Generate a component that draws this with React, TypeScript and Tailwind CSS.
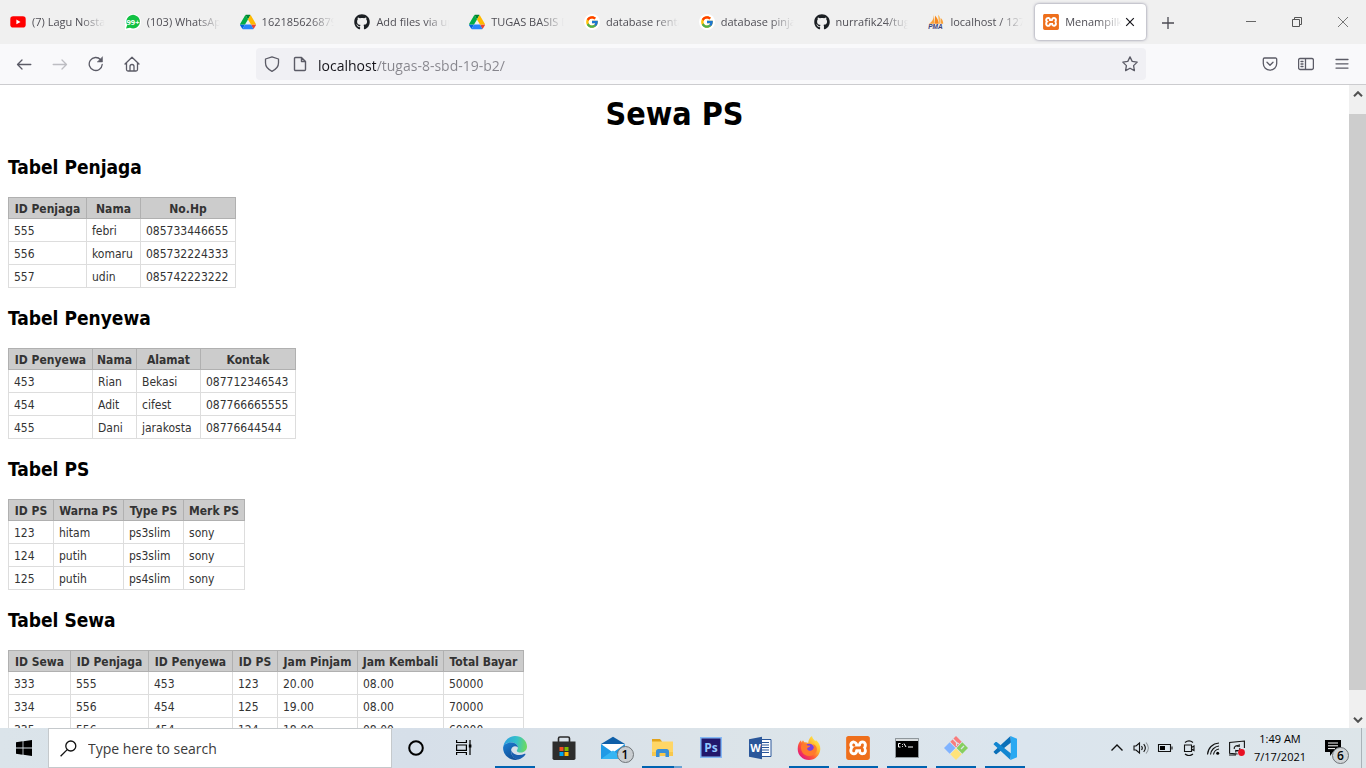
import type { ReactNode } from "react";
import { FaGithub } from "react-icons/fa";
import { FcGoogle } from "react-icons/fc";
import { SiXampp } from "react-icons/si";

function YouTubeIcon() {
  return (
    <svg viewBox="0 0 16 16" className="size-4">
      <rect x="0.3" y="2.3" width="15.4" height="11.2" rx="2.8" fill="#ff0000" />
      <path d="M6.4 5.5v4.8l4.1-2.4z" fill="#fff" />
    </svg>
  );
}

function WhatsAppIcon() {
  return (
    <svg viewBox="0 0 16 16" className="size-4">
      <path d="M0 16V8a8 8 0 1 1 8 8z" fill="#fff" />
      <path d="M1 14.6 2.2 11A6.8 6.8 0 1 1 5 13.7z" fill="#12c143" />
      <text x="8" y="10.6" textAnchor="middle" fontSize="7.5" fontWeight="700" fill="#fff" fontFamily="Open Sans, sans-serif">
        99+
      </text>
    </svg>
  );
}

function DriveIcon() {
  return (
    <svg viewBox="0 0 87.3 78" className="size-4">
      <path d="m6.6 66.85 3.85 6.65c.8 1.4 1.95 2.5 3.3 3.3l13.75-23.8h-27.5c0 1.55.4 3.1 1.2 4.5z" fill="#0066da" />
      <path d="m43.65 25-13.75-23.8c-1.35.8-2.5 1.9-3.3 3.3l-25.4 44a9 9 0 0 0-1.2 4.5h27.5z" fill="#00ac47" />
      <path d="m73.55 76.8c1.35-.8 2.5-1.9 3.3-3.3l1.6-2.75 7.65-13.25c.8-1.4 1.2-2.95 1.2-4.5h-27.5l5.85 11.5z" fill="#ea4335" />
      <path d="m43.65 25 13.75-23.8c-1.35-.8-2.9-1.2-4.5-1.2h-18.5c-1.6 0-3.15.45-4.5 1.2z" fill="#00832d" />
      <path d="m59.8 53h-32.3l-13.75 23.8c1.35.8 2.9 1.2 4.5 1.2h50.8c1.6 0 3.15-.45 4.5-1.2z" fill="#2684fc" />
      <path d="m73.4 26.5-12.7-22c-.8-1.4-1.95-2.5-3.3-3.3l-13.75 23.8 16.15 28h27.45c0-1.55-.4-3.1-1.2-4.5z" fill="#ffba00" />
    </svg>
  );
}

function GoogleIcon() {
  return (
    <span className="flex size-4 items-center justify-center rounded-full bg-white">
      <FcGoogle className="size-3.5" />
    </span>
  );
}

function PmaIcon() {
  return (
    <svg viewBox="0 0 16 16" className="size-4">
      <path d="M5.8 0.5C6 4 4.5 8 0.8 9.700h6z" fill="#f9a13a" />
      <path d="M7 1.5v8.200h3.800C10.600 7 9 3.500 7 1.500z" fill="#f7891e" />
      <path d="M10 0.800c2.500 2 3 5.500 2 8.900h-1z" fill="#fbb85c" />
      <path d="M12.800 4c1.800 1.500 2.400 4 2.400 5.700h-2.600z" fill="#f9a13a" />
      <text x="7.500" y="15" textAnchor="middle" fontSize="6.500" fontWeight="700" fontStyle="italic" fill="#3a3f78" fontFamily="Liberation Sans, sans-serif">
        PMA
      </text>
    </svg>
  );
}

function XamppTile({ small }: { small?: boolean }) {
  return (
    <span className={small ? "flex size-4 rounded-sm bg-white" : "flex size-6 rounded-sm bg-white"}>
      <SiXampp className={small ? "size-4 text-[#ee6f1c]" : "size-6 text-[#ee6f1c]"} />
    </span>
  );
}

type Tab = { title: string; icon: ReactNode };

const tabs: Tab[] = [
  { title: "(7) Lagu Nostalgia", icon: <YouTubeIcon /> },
  { title: "(103) WhatsApp", icon: <WhatsAppIcon /> },
  { title: "1621856268790", icon: <DriveIcon /> },
  { title: "Add files via upload", icon: <FaGithub className="size-4 text-[#1b1f23]" /> },
  { title: "TUGAS BASIS DATA", icon: <DriveIcon /> },
  { title: "database rental", icon: <GoogleIcon /> },
  { title: "database pinjam", icon: <GoogleIcon /> },
  { title: "nurrafik24/tugas", icon: <FaGithub className="size-4 text-[#1b1f23]" /> },
  { title: "localhost / 127.0.0.1", icon: <PmaIcon /> },
];

function TabTitle({ children }: { children: ReactNode }) {
  return (
    <span className="min-w-0 flex-1 overflow-hidden pt-px text-left text-[11px] whitespace-nowrap text-[#4f4e55] [mask-image:linear-gradient(to_left,transparent,black_24px)]">
      {children}
    </span>
  );
}

function TabStrip() {
  return (
    <div className="flex h-11 shrink-0 bg-[#f0f0f0]">
      <div role="tablist" className="flex min-w-0 flex-1">
        {tabs.map((tab) => (
          <div key={tab.title} className="flex min-w-0 flex-1 px-0.5 py-1">
            <button role="tab" aria-selected="false" className="flex min-w-0 flex-1 items-center gap-1.5 rounded px-2">
              <span className="shrink-0">{tab.icon}</span>
              <TabTitle>{tab.title}</TabTitle>
            </button>
          </div>
        ))}
        <div className="flex min-w-0 flex-1 px-0.5 py-1">
          <div className="flex min-w-0 flex-1 items-center rounded bg-white px-2 shadow-[0_0_3px_rgba(80,80,110,0.7)]">
            <button role="tab" aria-selected="true" className="flex min-w-0 flex-1 items-center gap-1.5">
              <span className="shrink-0">
                <XamppTile small />
              </span>
              <TabTitle>Menampilkan Data</TabTitle>
            </button>
            <button aria-label="Close tab" className="shrink-0">
              <svg viewBox="0 0 16 16" className="size-4" stroke="#15141a" strokeWidth="1.2">
                <path d="m4.200 4.200 7.600 7.600M11.800 4.200l-7.600 7.600" />
              </svg>
            </button>
          </div>
        </div>
      </div>
      <button aria-label="New tab" className="flex w-10 items-center justify-center pt-px">
        <svg viewBox="0 0 12 12" className="size-3" stroke="#4b4a52" strokeWidth="1.300">
          <path d="M6 0v12M0 6h12" />
        </svg>
      </button>
      <div className="ml-10 flex">
        <button aria-label="Minimize" className="flex w-[46px] items-center justify-center">
          <svg viewBox="0 0 10 10" className="size-2.5" stroke="#666" strokeWidth="1">
            <path d="M0 4.500h10" />
          </svg>
        </button>
        <button aria-label="Restore" className="flex w-[46px] items-center justify-center">
          <svg viewBox="0 0 10 10" className="size-2.5" fill="none" stroke="#555" strokeWidth="1">
            <path d="M.5 2.500h7v7h-7zM2.500 2.500v-2h7v7h-2" />
          </svg>
        </button>
        <button aria-label="Close window" className="flex w-[46px] items-center justify-center">
          <svg viewBox="0 0 10 10" className="size-2.5" stroke="#666" strokeWidth="0.9">
            <path d="m0 0 10 10M10 0 0 10" />
          </svg>
        </button>
      </div>
    </div>
  );
}

function ToolButton({ label, children }: { label: string; children: ReactNode }) {
  return (
    <button aria-label={label} className="flex w-9 items-center justify-center">
      <svg viewBox="0 0 16 16" className="size-4" fill="none" stroke="#5b5b66" strokeWidth="1.300" strokeLinecap="round" strokeLinejoin="round">
        {children}
      </svg>
    </button>
  );
}

function Toolbar() {
  return (
    <div className="flex h-[41px] shrink-0 items-stretch border-b border-[#cccccf] bg-[#f9f9fb] px-1.5">
      <ToolButton label="Back">
        <path d="M14.800 8.500H1.500M6 4 1.500 8.500 6 13" />
      </ToolButton>
      <ToolButton label="Forward">
        <path d="M1.200 8.500h13.300M10 4l4.500 4.500L10 13" stroke="#bdbdc2" />
      </ToolButton>
      <ToolButton label="Reload">
        <path d="M14.200 8.500A6.500 6.500 0 1 1 12.600 3.700" />
        <path d="M14.500 1v5h-5z" fill="#5b5b66" strokeWidth="0.500" />
      </ToolButton>
      <ToolButton label="Home">
        <path d="m1 8 7-6.800L15 8M2.500 7v6.500a1.500 1.500 0 0 0 1.500 1.500h8a1.500 1.500 0 0 0 1.500-1.500V7M6 15v-4.500a2 2 0 0 1 4 0V15" />
      </ToolButton>
      <div className="my-1 mr-[106px] ml-[106px] flex min-w-0 flex-1 items-center rounded bg-[#f0f0f4] px-2">
        <svg viewBox="0 0 16 16" className="size-4 shrink-0" fill="none" stroke="#5b5b66" strokeWidth="1.300" strokeLinejoin="round">
          <path d="M8 .8 14.500 3v4c0 3.800-2.800 6.500-6.500 8.300C4.300 13.500 1.500 10.800 1.500 7V3z" />
        </svg>
        <svg viewBox="0 0 16 16" className="ml-3 size-4 shrink-0" fill="none" stroke="#5b5b66" strokeWidth="1.400" strokeLinejoin="round">
          <path d="M3.500 1.500H9.500L13.500 5.500V13.500a1 1 0 0 1-1 1h-9a1 1 0 0 1-1-1v-11a1 1 0 0 1 1-1zM9.500 1.500v4h4" />
        </svg>
        <input
          aria-label="Address"
          defaultValue="localhost/tugas-8-sbd-19-b2/"
          className="ml-2.5 min-w-0 flex-1 bg-[linear-gradient(90deg,#15141a_58px,#86858c_58px)] bg-clip-text pt-0.5 text-[14px] text-transparent outline-none"
        />
        <button aria-label="Bookmark this page">
          <svg viewBox="0 0 16 16" className="size-4" fill="none" stroke="#5b5b66" strokeWidth="1.300" strokeLinejoin="round">
            <path d="m8 .9 2.200 4.500 5 .7-3.600 3.500.8 5L8 12.200l-4.400 2.400.8-5L.8 6.100l5-.7z" />
          </svg>
        </button>
      </div>
      <div className="flex">
        <ToolButton label="Save to Pocket">
          <path d="M2.500 2h11a1.200 1.200 0 0 1 1.200 1.200V7.500a6.700 6.700 0 0 1-13.400 0V3.200A1.200 1.200 0 0 1 2.500 2zM5 6.300 8 9.200l3-2.900" />
        </ToolButton>
        <ToolButton label="Sidebars">
          <path d="M2 2.500h12A1.500 1.500 0 0 1 15.400 4v8a1.500 1.500 0 0 1-1.400 1.500H2A1.500 1.500 0 0 1 .6 12V4A1.500 1.500 0 0 1 2 2.500zM7.500 2.500v11M3 5.500h2M3 8h2M3 10.500h2" />
        </ToolButton>
        <ToolButton label="Menu">
          <path d="M2 3.500h12M2 7.800h12M2 12.100h12" />
        </ToolButton>
      </div>
    </div>
  );
}

type Sheet = { title: string; cols: { label: string; width: number }[]; rows: string[][] };

const sheets: Sheet[] = [
  {
    title: "Tabel Penjaga",
    cols: [
      { label: "ID Penjaga", width: 78 },
      { label: "Nama", width: 54 },
      { label: "No.Hp", width: 95 },
    ],
    rows: [
      ["555", "febri", "085733446655"],
      ["556", "komaru", "085732224333"],
      ["557", "udin", "085742223222"],
    ],
  },
  {
    title: "Tabel Penyewa",
    cols: [
      { label: "ID Penyewa", width: 84 },
      { label: "Nama", width: 44 },
      { label: "Alamat", width: 64 },
      { label: "Kontak", width: 95 },
    ],
    rows: [
      ["453", "Rian", "Bekasi", "087712346543"],
      ["454", "Adit", "cifest", "087766665555"],
      ["455", "Dani", "jarakosta", "08776644544"],
    ],
  },
  {
    title: "Tabel PS",
    cols: [
      { label: "ID PS", width: 45 },
      { label: "Warna PS", width: 70 },
      { label: "Type PS", width: 60 },
      { label: "Merk PS", width: 61 },
    ],
    rows: [
      ["123", "hitam", "ps3slim", "sony"],
      ["124", "putih", "ps3slim", "sony"],
      ["125", "putih", "ps4slim", "sony"],
    ],
  },
  {
    title: "Tabel Sewa",
    cols: [
      { label: "ID Sewa", width: 62 },
      { label: "ID Penjaga", width: 78 },
      { label: "ID Penyewa", width: 84 },
      { label: "ID PS", width: 45 },
      { label: "Jam Pinjam", width: 80 },
      { label: "Jam Kembali", width: 86 },
      { label: "Total Bayar", width: 80 },
    ],
    rows: [
      ["333", "555", "453", "123", "20.00", "08.00", "50000"],
      ["334", "556", "454", "125", "19.00", "08.00", "70000"],
      ["335", "556", "454", "124", "18.00", "08.00", "60000"],
    ],
  },
];

function SheetTable({ sheet }: { sheet: Sheet }) {
  return (
    <section>
      <h2 className="mb-[18px] text-[19px] leading-6 font-bold text-black">{sheet.title}</h2>
      <table className="w-0 table-fixed border-collapse text-[12px] leading-4 whitespace-nowrap text-[#333]">
        <colgroup>
          {sheet.cols.map((c) => (
            <col key={c.label} style={{ width: c.width }} />
          ))}
        </colgroup>
        <thead>
          <tr>
            {sheet.cols.map((c) => (
              <th key={c.label} className="h-[21px] border border-[#b0b0b0] bg-[#cccccc] p-0 pt-0.5 text-center font-bold">
                {c.label}
              </th>
            ))}
          </tr>
        </thead>
        <tbody>
          {sheet.rows.map((row) => (
            <tr key={row[0]}>
              {row.map((cell, i) => (
                <td key={i} className="h-[23px] border border-[#dddddd] px-[5px] pt-0.5 pb-0">
                  {cell}
                </td>
              ))}
            </tr>
          ))}
        </tbody>
      </table>
    </section>
  );
}

function Scrollbar() {
  return (
    <div className="flex w-[17px] shrink-0 flex-col bg-[#f0f0f0]">
      <button aria-label="Scroll up" className="flex h-[17px] items-center justify-center">
        <svg viewBox="0 0 10 6" className="h-1.5 w-2.5" fill="none" stroke="#505050" strokeWidth="2">
          <path d="m1 5.200 4-4 4 4" />
        </svg>
      </button>
      <div className="mt-3 mb-[21px] flex-1 bg-[#cdcdcd]" />
      <button aria-label="Scroll down" className="flex h-[17px] items-center justify-center">
        <svg viewBox="0 0 10 6" className="h-1.5 w-2.5" fill="none" stroke="#505050" strokeWidth="2">
          <path d="m1 .8 4 4 4-4" />
        </svg>
      </button>
    </div>
  );
}

function EdgeIcon() {
  return (
    <svg viewBox="0 0 24 24" className="size-6">
      <defs>
        <linearGradient id="edgeTop" x1="0" y1="0.4" x2="1" y2="0.5">
          <stop offset="0" stopColor="#2b9fe0" />
          <stop offset="0.55" stopColor="#35c1c9" />
          <stop offset="1" stopColor="#6edb5c" />
        </linearGradient>
        <linearGradient id="edgeLow" x1="0" y1="0" x2="0.6" y2="1">
          <stop offset="0" stopColor="#1b7fd4" />
          <stop offset="1" stopColor="#124f96" />
        </linearGradient>
      </defs>
      <path d="M.3 10.500C1.200 4.500 6.200 0 12 0c7 0 12 5 12 10.500 0 3.600-2.700 6-6 6-2.800 0-4.200-.9-4.200-1.800 0-.7 1.100-1.200 1.100-3.200C14.900 8.700 12 6.500 8.500 6.500 4.500 6.500 1 8.700.3 10.500z" fill="url(#edgeTop)" />
      <path d="M.1 12C.1 8.900 4 6.500 8.300 6.500c3.700 0 6.600 2.300 6.600 5-.9-.9-2-1.300-3.200-1.200-3 .4-4.200 3.400-3.500 6.600.7 3 3.100 5.800 7 6.600C7.600 25.500.1 19.500.1 12z" fill="url(#edgeLow)" />
      <path d="M8.400 14c-1.200 4.600 2.700 9.700 7 9.500 3-.8 5.500-2.600 7-5 .3-.6-.2-1-.8-.7-5 2.400-12.300 1.200-13.200-3.800z" fill="#1a5fb0" />
    </svg>
  );
}

function StoreIcon() {
  return (
    <svg viewBox="0 0 24 24" className="size-6">
      <path d="M6.500 6V2.500a1.500 1.500 0 0 1 1.500-1.500h8a1.500 1.500 0 0 1 1.500 1.500V6" fill="none" stroke="#2a2a2a" strokeWidth="1.600" />
      <path d="M.5 5.500h23v16.800a1.700 1.700 0 0 1-1.700 1.700H2.200a1.700 1.700 0 0 1-1.700-1.700z" fill="#2d2d2d" />
      <path d="M7.500 11h4v4h-4z" fill="#f25022" />
      <path d="M12.500 11h4v4h-4z" fill="#7fba00" />
      <path d="M7.500 16h4v4h-4z" fill="#00a4ef" />
      <path d="M12.500 16h4v4h-4z" fill="#ffb900" />
    </svg>
  );
}

function MailIcon() {
  return (
    <span className="relative flex">
      <svg viewBox="0 0 24 24" className="size-6">
        <path d="M0 8 12 .8 24 8z" fill="#0f5fa8" />
        <path d="M2 8h20v8H2z" fill="#fff" />
        <path d="M0 8v15h24V8l-12 8.500z" fill="#1f9ae6" />
        <path d="M0 23 12 14.500 24 23z" fill="#35b5f3" />
      </svg>
      <span className="absolute top-2.5 left-4 flex size-[17px] items-center justify-center rounded-full border border-[#6f7478] bg-[#c9cdd1] text-[12px] leading-none font-semibold text-black">
        1
      </span>
    </span>
  );
}

function ExplorerIcon() {
  return (
    <svg viewBox="0 0 24 24" className="size-6">
      <path d="M2 3h8l2 2.500v3H2z" fill="#e2a31b" />
      <path d="M2 5.500h21V20H2z" fill="#ffd666" />
      <path d="M2 16h21v4H2z" fill="#f8c84c" />
      <path d="M6 21v-5.500A2.500 2.500 0 0 1 8.500 13h8a2.500 2.500 0 0 1 2.500 2.500V21h-3.500v-4h-6v4z" fill="#3a8fd6" />
    </svg>
  );
}

function PhotoshopIcon() {
  return (
    <svg viewBox="0 0 24 24" className="size-6">
      <path d="M1 1h22v21H1z" fill="#86b9f5" />
      <path d="M2.500 2.500h19v18h-19z" fill="#22176b" />
      <text x="12" y="16" textAnchor="middle" fontSize="12" fontWeight="700" fill="#93c6ff" fontFamily="Open Sans, sans-serif">
        Ps
      </text>
    </svg>
  );
}

function WordIcon() {
  return (
    <svg viewBox="0 0 24 24" className="size-6">
      <path d="M12 3.500h11v17H12z" fill="#fff" stroke="#2b579a" />
      <path d="M14 6.500h7M14 9h7M14 11.500h7M14 14h7M14 16.500h7" stroke="#2b579a" strokeWidth="1.100" />
      <path d="M1 3.200 14 .8v22.500L1 20.800z" fill="#2b579a" />
      <text x="7.500" y="16" textAnchor="middle" fontSize="11" fontWeight="700" fill="#fff" fontFamily="Open Sans, sans-serif">
        W
      </text>
    </svg>
  );
}

function FirefoxIcon() {
  return (
    <svg viewBox="0 0 24 24" className="size-6">
      <defs>
        <linearGradient id="foxBody" x1="0.9" y1="0.1" x2="0.15" y2="0.9">
          <stop offset="0" stopColor="#fff14f" />
          <stop offset="0.35" stopColor="#ffb52d" />
          <stop offset="0.65" stopColor="#ff5a36" />
          <stop offset="1" stopColor="#e3157d" />
        </linearGradient>
      </defs>
      <path d="M15 0c.3 2 1.200 3 3 4.700l1.500-.2c2.300 2 3.900 5.200 3.800 8.500C23.100 19.200 18.200 24 12 24S.7 19.300.7 13C.7 9.500 1.800 6.500 4 4.300L4.600 6.500 6 4.200l1.200 2c1.400-.2 3 .1 4 .8C11.500 4 12.600 1.500 15 0z" fill="url(#foxBody)" />
      <circle cx="12.300" cy="12.800" r="5" fill="#7a3fe0" />
      <path d="M4.500 8.500c2.500-1.200 4.500-.6 6 .9l2.700.4c-.2 1.500-2.700 1.600-3 2.500-.3 2 1.800 3 4.200 2.200 2.700-.8 3.300-4.500 1-6.500 3.500.9 5.200 4 4.200 7.300-2.500 5.800-11.300 6.200-14.200 1.200-1.500-2.600-1.900-5.400-.9-8z" fill="#ff7a2d" />
    </svg>
  );
}

function TerminalIcon() {
  return (
    <svg viewBox="0 0 24 24" className="size-6">
      <path d="M.5 2.500h23v19H.5z" fill="#000" stroke="#8f979c" />
      <path d="M1 3h22v2H1z" fill="#d8dcde" />
      <path d="M5.500 7.500h-2v3.500h2M7.500 8v.8M7.500 10.200v.8M9 7.500l2 3.500M13 11h5" stroke="#fff" strokeWidth="1" fill="none" />
    </svg>
  );
}

function GitIcon() {
  return (
    <svg viewBox="0 0 24 24" className="size-6">
      <path d="m12 0 5.700 5.700L12 11.400 6.300 5.700z" fill="#f87c7c" />
      <path d="m18.300 6.300 5.700 5.700-5.700 5.700-5.700-5.700z" fill="#86cf5e" />
      <path d="m12 12.600 5.700 5.700L12 24l-5.700-5.700z" fill="#ffe37a" />
      <path d="m5.700 6.300 5.700 5.700-5.700 5.700L0 12z" fill="#80b3ff" />
      <path d="m8.500 2.500 4 4V10M12.500 6.500 15 8" stroke="#dbe4ec" strokeWidth="1.200" fill="none" />
      <path d="M17 13l3-3" stroke="#dbe4ec" strokeWidth="1.200" />
    </svg>
  );
}

function CodeIcon() {
  return (
    <svg viewBox="0 0 24 24" className="size-6">
      <path d="M17.500 0 1 15.200c-.5.400-.5 1 0 1.400l1.500 1.300c.4.300.8.300 1.200 0L18 6.500z" fill="#0b6fb8" />
      <path d="M17.500 24 1 8.800c-.5-.4-.5-1 0-1.400l1.500-1.300c.4-.3.8-.3 1.200 0L18 17.500z" fill="#1286d1" />
      <path d="M17.500 0 24 2.800v18.400L17.500 24c-.5.100.3 0 .3-1V1c0-1-.8-.9-.3-1z" fill="#2aa9f2" />
    </svg>
  );
}

const pinned: { name: string; icon: ReactNode; open?: boolean; stacked?: boolean }[] = [
  { name: "Microsoft Edge", icon: <EdgeIcon />, open: true },
  { name: "Microsoft Store", icon: <StoreIcon /> },
  { name: "Mail", icon: <MailIcon /> },
  { name: "File Explorer", icon: <ExplorerIcon />, open: true, stacked: true },
  { name: "Photoshop", icon: <PhotoshopIcon /> },
  { name: "Word", icon: <WordIcon /> },
  { name: "Firefox", icon: <FirefoxIcon />, open: true },
  { name: "XAMPP", icon: <XamppTile />, open: true },
  { name: "Command Prompt", icon: <TerminalIcon />, open: true },
  { name: "Git Bash", icon: <GitIcon />, open: true },
  { name: "Visual Studio Code", icon: <CodeIcon />, open: true },
];

function TrayIcon({ label, children }: { label: string; children: ReactNode }) {
  return (
    <button aria-label={label} className="flex w-6 items-center justify-center">
      <svg viewBox="0 0 16 16" className="size-4" fill="none" stroke="#111" strokeWidth="1.100">
        {children}
      </svg>
    </button>
  );
}

function Taskbar() {
  return (
    <footer className="flex h-10 shrink-0 bg-[linear-gradient(90deg,#dbe4ea,#d6dfe9_30%,#dce4e9_55%,#dbe5ee_75%,#dde5e9)]">
      <button aria-label="Start" className="flex w-12 items-center justify-center">
        <svg viewBox="0 0 16 16" className="size-4">
          <path d="M0 2.200 6.600 1.300v6.300H0zM7.400 1.200 16 0v7.600H7.400zM0 8.400h6.600v6.300L0 13.800zM7.400 8.400H16V16l-8.600-1.200z" />
        </svg>
      </button>
      <label className="flex w-[344px] items-center gap-[11px] border border-[#c5c9cc] bg-white pl-[11px]">
        <svg viewBox="0 0 17 17" className="size-[17px] shrink-0" fill="none" stroke="#111" strokeWidth="1.300">
          <circle cx="10.800" cy="6" r="5" />
          <path d="M7.200 9.600.6 16.300" />
        </svg>
        <input placeholder="Type here to search" className="min-w-0 flex-1 text-[14px] outline-none placeholder:text-[#3b3b3b]" />
      </label>
      <button aria-label="Cortana" className="flex w-12 items-center justify-center">
        <svg viewBox="0 0 16 16" className="size-4" fill="none" stroke="#000" strokeWidth="2">
          <circle cx="8" cy="8" r="6.800" />
        </svg>
      </button>
      <button aria-label="Task View" className="mr-0.5 flex w-12 items-center justify-center">
        <svg viewBox="0 0 16 16" className="size-4" fill="none" stroke="#000" strokeWidth="1.200">
          <path d="M.6 0v2.500h9.800V0M.6 15v-2.500h9.800V15M.6 5h9.800v5.400H.6zM14 0v15" />
          <path d="M12.800 4.500h2.600v3h-2.600z" fill="#000" stroke="none" />
        </svg>
      </button>
      <div className="flex">
        {pinned.map((app) => (
          <button key={app.name} aria-label={app.name} className="flex w-[49px] flex-col items-center">
            <span className="flex flex-1 items-center pt-0.5">{app.icon}</span>
            <span className="flex h-0.5 w-10">
              {app.open && <span className="flex-1 bg-[#0063b1]" />}
              {app.stacked && <span className="w-2 bg-[#6aa3d3]" />}
            </span>
          </button>
        ))}
      </div>
      <div className="ml-auto flex">
        <TrayIcon label="Show hidden icons">
          <path d="m2.500 10.500 5.500-5.500 5.500 5.500" strokeWidth="1.400" />
        </TrayIcon>
        <TrayIcon label="Volume">
          <path d="M1 6v4h2l3.500 3V3L3 6zM8.500 6c1 1.200 1 2.800 0 4M10.700 4.200c2 2.300 2 5.300 0 7.600" />
          <path d="M13 2.500c3 3.300 3 7.700 0 11" stroke="#8c9296" />
        </TrayIcon>
        <TrayIcon label="Battery">
          <path d="M1.500 4.500h12v7h-12zM15 6.500v3" />
          <path d="M3 6h5v4H3z" fill="#000" stroke="none" />
        </TrayIcon>
        <TrayIcon label="Meet Now">
          <path d="M3.500 5h7v6.500h-7zM10.500 7.500 13 6v4.500l-2.500-1.500M4 2.500c2.500-2 5.500-2 8 0M4 14c2.500 2 5.500 2 8 0" />
        </TrayIcon>
        <TrayIcon label="Network">
          <path d="M2.500 14.500C3 8 7.500 3.500 14 3M5.500 14.500c.5-4.500 4-8 8.500-8.500M8.500 14.500c.5-3 2.500-5 5.500-5.500" />
          <circle cx="12.700" cy="13.300" r="1.500" fill="#000" stroke="none" />
        </TrayIcon>
        <TrayIcon label="Display">
          <path d="M15.400 8V1L.6 2.500v10.700l8 .8M0 15h7M5.200 9c-.5-3 2.800-4.200 5-2.800V4.200M10.200 6.200H8M10.800 8c.5 2.500-2 3.600-4 2.600v2M6.800 10.600H9" />
          <circle cx="12.500" cy="12.500" r="3.400" fill="#e81123" stroke="none" />
        </TrayIcon>
        <button className="flex w-[62px] flex-col items-center justify-center text-[11px] leading-[18px] text-black">
          <span>1:49 AM</span>
          <span>7/17/2021</span>
        </button>
        <button aria-label="Notifications" className="flex w-[51px] items-center border-r border-[#aab2b8] pl-[14px]">
          <span className="relative flex">
            <svg viewBox="0 0 16 16" className="size-4">
              <path d="M0 0h16v12H8l-3 4v-4H0z" />
              <path d="M3 3h10M3 5.800h10M3 8.600h7" stroke="#fff" strokeWidth="1" />
            </svg>
            <span className="absolute top-[7px] left-[7px] flex size-[17px] items-center justify-center rounded-full border border-[#6f7478] bg-[#d0d4d7] text-[12px] leading-none font-semibold text-black">
              6
            </span>
          </span>
        </button>
        <div className="w-1" />
      </div>
    </footer>
  );
}

export default function App() {
  return (
    <div className="flex h-screen flex-col overflow-hidden bg-white font-['Open_Sans','Noto_Sans',sans-serif]">
      <TabStrip />
      <Toolbar />
      <div className="flex min-h-0 flex-1">
        <main className="flex min-w-0 flex-1 flex-col gap-[18px] overflow-hidden px-2 pt-[9px] font-['DejaVu_Sans_Condensed','DejaVu_Sans',sans-serif]">
          <h1 className="mb-[3px] text-center text-[32px] leading-10 font-bold text-black">Sewa PS</h1>
          {sheets.map((sheet) => (
            <SheetTable key={sheet.title} sheet={sheet} />
          ))}
        </main>
        <Scrollbar />
      </div>
      <Taskbar />
    </div>
  );
}
